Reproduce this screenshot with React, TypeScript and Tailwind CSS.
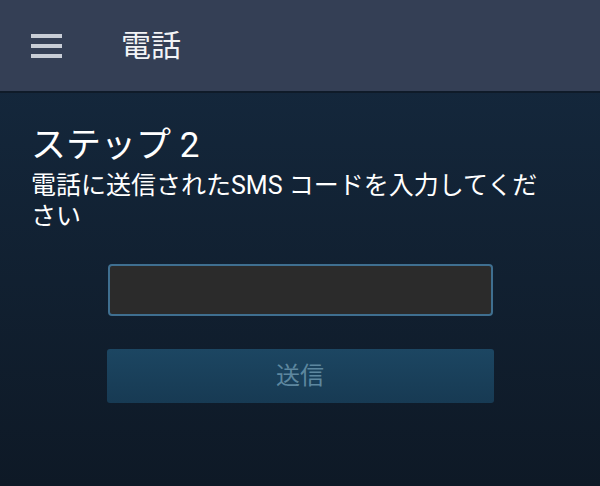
const font = { fontFamily: 'Roboto, "Noto Sans CJK JP", sans-serif' };

export default function App() {
    return (
        <div
            className="w-[600px] h-[486px] overflow-hidden bg-gradient-to-b from-[#152a40] to-[#0e1926] text-white"
            style={font}
        >
            {/* top bar */}
            <header className="h-[93px] bg-[#343f55] border-b-2 border-[#0f1b29] flex items-center">
                <div className="w-[31px] ml-[31px] flex flex-col gap-[6px]">
                    <span className="h-[4px] bg-[#c8cdd6]" />
                    <span className="h-[4px] bg-[#c8cdd6]" />
                    <span className="h-[4px] bg-[#c8cdd6]" />
                </div>
                <h1 className="ml-[59px] text-[30px] leading-none text-[#f2f3f5]">電話</h1>
            </header>

            <main className="pt-[32px] px-[31px]">
                <h2 className="text-[35px] leading-[41px] text-white">ステップ 2</h2>
                <p className="mt-[4px] w-[530px] text-[25px] leading-[31px] text-white">
                    電話に送信されたSMS コードを入力してください
                </p>

                <div className="mt-[32px] flex flex-col items-center">
                    <input
                        className="w-[385px] h-[52px] rounded-[4px] border-2 border-[#3f6f90] bg-[#2b2b2b] outline-none"
                        type="text"
                    />
                    <button className="mt-[33px] w-[387px] h-[54px] rounded-[3px] bg-gradient-to-b from-[#1c4662] to-[#173a53] text-[24px] text-[#5d879f]">
                        送信
                    </button>
                </div>
            </main>
        </div>
    );
}
